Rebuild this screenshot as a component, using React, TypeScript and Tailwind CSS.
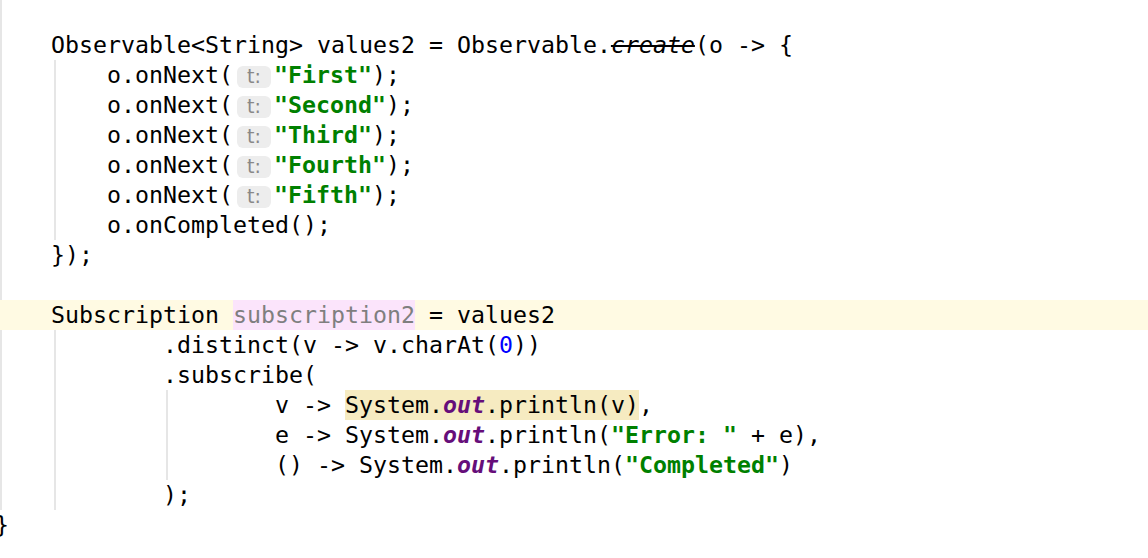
import React from "react";

const mono = { fontFamily: '"DejaVu Sans Mono", "Liberation Mono", monospace' };

function Hint() {
  return (
    <span
      className="inline-flex items-center justify-center align-middle w-[34px] h-[22px] ml-[4px] mr-[3px] rounded-[6px] bg-[#EDEDED] text-[#888888] text-[19px] leading-none"
      style={{ fontFamily: '"DejaVu Sans", "Noto Sans", sans-serif' }}
    >
      t:
    </span>
  );
}

function Str({ children }: { children: React.ReactNode }) {
  return <span className="text-[#008000] font-bold">{children}</span>;
}

function Out() {
  return <span className="text-[#660E7A] font-bold italic">out</span>;
}

function Row({ children, className = "" }: { children?: React.ReactNode; className?: string }) {
  return <div className={"h-[30px] leading-[30px] whitespace-pre " + className}>{children}</div>;
}

export default function App() {
  const next = (s: string) => (
    <Row>
      {"        o.onNext("}
      <Hint />
      <Str>{`"${s}"`}</Str>
      {");"}
    </Row>
  );
  return (
    <div className="relative w-[1148px] h-[558px] overflow-hidden bg-white text-black">
      <div className="absolute left-0 top-0 w-[2px] h-[300px] bg-[#E6E6E6]" />
      <div className="absolute left-0 top-[330px] w-[2px] h-[180px] bg-[#E6E6E6]" />
      <div className="absolute left-[54px] top-[60px] w-[2px] h-[180px] bg-[#E6E6E6]" />
      <div className="absolute left-[54px] top-[330px] w-[2px] h-[180px] bg-[#E6E6E6]" />
      <div className="absolute left-[166px] top-[390px] w-[2px] h-[90px] bg-[#E6E6E6]" />
      <div className="relative ml-[-5px] text-[23.26px]" style={mono}>
        <Row />
        <Row>
          {"    Observable<String> values2 = Observable."}
          <span className="italic line-through">create</span>
          {"(o -> {"}
        </Row>
        {next("First")}
        {next("Second")}
        {next("Third")}
        {next("Fourth")}
        {next("Fifth")}
        <Row>{"        o.onCompleted();"}</Row>
        <Row>{"    });"}</Row>
        <Row />
        <Row className="bg-[#FFFAE3] ml-[5px]">
          <span className="ml-[-5px]">{"    Subscription "}</span>
          <span className="inline-block align-top h-[30px] bg-[#FBE4FB] text-[#7F7F7F]">subscription2</span>
          {" = values2"}
        </Row>
        <Row>
          {"            .distinct(v -> v.charAt("}
          <span className="text-[#0000FF]">0</span>
          {"))"}
        </Row>
        <Row>{"            .subscribe("}</Row>
        <Row>
          {"                    v -> "}
          <span className="inline-block align-top h-[30px] bg-[#F6EBC1]">
            {"System."}
            <Out />
            {".println(v)"}
          </span>
          {","}
        </Row>
        <Row>
          {"                    e -> System."}
          <Out />
          {".println("}
          <Str>{'"Error: "'}</Str>
          {" + e),"}
        </Row>
        <Row>
          {"                    () -> System."}
          <Out />
          {".println("}
          <Str>{'"Completed"'}</Str>
          {")"}
        </Row>
        <Row>{"            );"}</Row>
        <Row>{"}"}</Row>
      </div>
    </div>
  );
}
